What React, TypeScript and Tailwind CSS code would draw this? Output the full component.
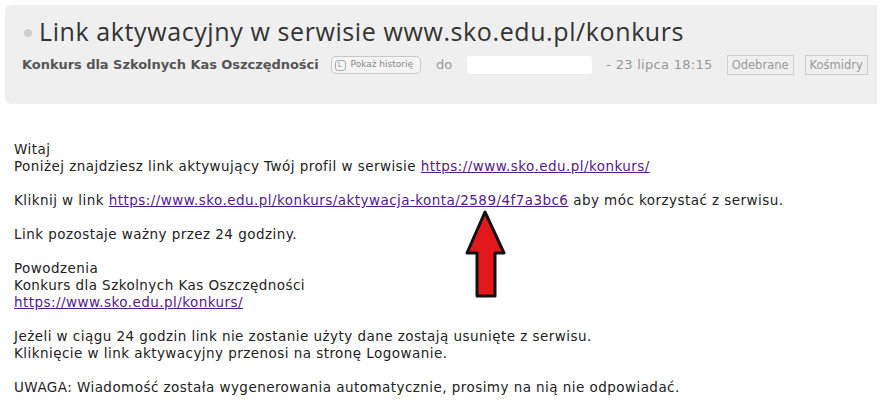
import React from "react";

const body = "font-['DejaVu_Sans',Verdana,sans-serif]";

function Tag({ label }: { label: string }) {
  return (
    <span className="shrink-0 border border-[#cfcfcf] px-[4px] h-[20px] leading-[18px] text-[11.5px] text-[#9a9a9a]">
      {label}
    </span>
  );
}

function Arrow() {
  return (
    <svg width="42" height="90" viewBox="0 0 42 90" className="absolute left-[465px] top-[210px]">
      <path
        d="M20 2 L39 43 L30 43 L30 86 L12 86 L12 43 L2 43 Z"
        fill="#e3181c"
        stroke="#111"
        strokeWidth="3"
        strokeLinejoin="round"
      />
    </svg>
  );
}

export default function App() {
  return (
    <div className={`relative w-[881px] h-[416px] bg-white overflow-hidden ${body}`}>
      <div className="ml-[5px] mt-[5px] w-[872px] h-[99px] bg-[#efefef] rounded-l-[6px] pl-[17px] pt-[11px]">
        <div className="flex items-center">
          <span className="w-[8px] h-[8px] rounded-full bg-[#cfcfcf] ml-[2px] mr-[7px] mt-[3px]" />
          <h1 className="font-['Open_Sans',sans-serif] text-[25px] leading-[30px] text-[#333] tracking-[0.6px]">
            Link aktywacyjny w serwisie www.sko.edu.pl/konkurs
          </h1>
        </div>
        <div className="flex items-center mt-[9px] h-[20px] whitespace-nowrap">
          <span className="shrink-0 font-bold text-[#555] text-[13px] tracking-[-0.05px]">Konkurs dla Szkolnych Kas Oszczędności</span>
          <span className="shrink-0 ml-[12px] flex items-center h-[18px] border border-[#c8c8c8] rounded-[5px] px-[3px] text-[9px] text-[#888] bg-[#f4f4f4]">
            <span className="w-[11px] h-[11px] border border-[#aaa] rounded-[3px] text-[7px] leading-[9px] text-center mr-[5px]">L</span>
            Pokaż historię
            <span className="w-[4px]" />
          </span>
          <span className="shrink-0 ml-[15px] text-[#999] text-[13px]">do</span>
          <span className="shrink-0 ml-[15px] w-[125px] h-[18px] bg-white rounded-[3px]" />
          <span className="shrink-0 ml-[14px] text-[#999] text-[13px] tracking-[0.3px]">- 23 lipca 18:15</span>
          <span className="shrink-0 ml-[14px] flex gap-[11px]">
            <Tag label="Odebrane" />
            <Tag label="Kośmidry" />
          </span>
        </div>
      </div>
      <div className="pl-[14px] pt-[37px] text-[13.5px] tracking-[0.45px] leading-[17px] text-[#222]">
        Witaj
        <br />
        Poniżej znajdziesz link aktywujący Twój profil w serwisie{" "}
        <a className="text-[#551a8b] underline">https://www.sko.edu.pl/konkurs/</a>
        <br />
        <br />
        Kliknij w link{" "}
        <a className="text-[#551a8b] underline">https://www.sko.edu.pl/konkurs/aktywacja-konta/2589/4f7a3bc6</a>{" "}
        aby móc korzystać z serwisu.
        <br />
        <br />
        Link pozostaje ważny przez 24 godziny.
        <br />
        <br />
        Powodzenia
        <br />
        Konkurs dla Szkolnych Kas Oszczędności
        <br />
        <a className="text-[#551a8b] underline">https://www.sko.edu.pl/konkurs/</a>
        <br />
        <br />
        Jeżeli w ciągu 24 godzin link nie zostanie użyty dane zostają usunięte z serwisu.
        <br />
        Kliknięcie w link aktywacyjny przenosi na stronę Logowanie.
        <br />
        <br />
        UWAGA: Wiadomość została wygenerowania automatycznie, prosimy na nią nie odpowiadać.
      </div>
      <Arrow />
    </div>
  );
}
